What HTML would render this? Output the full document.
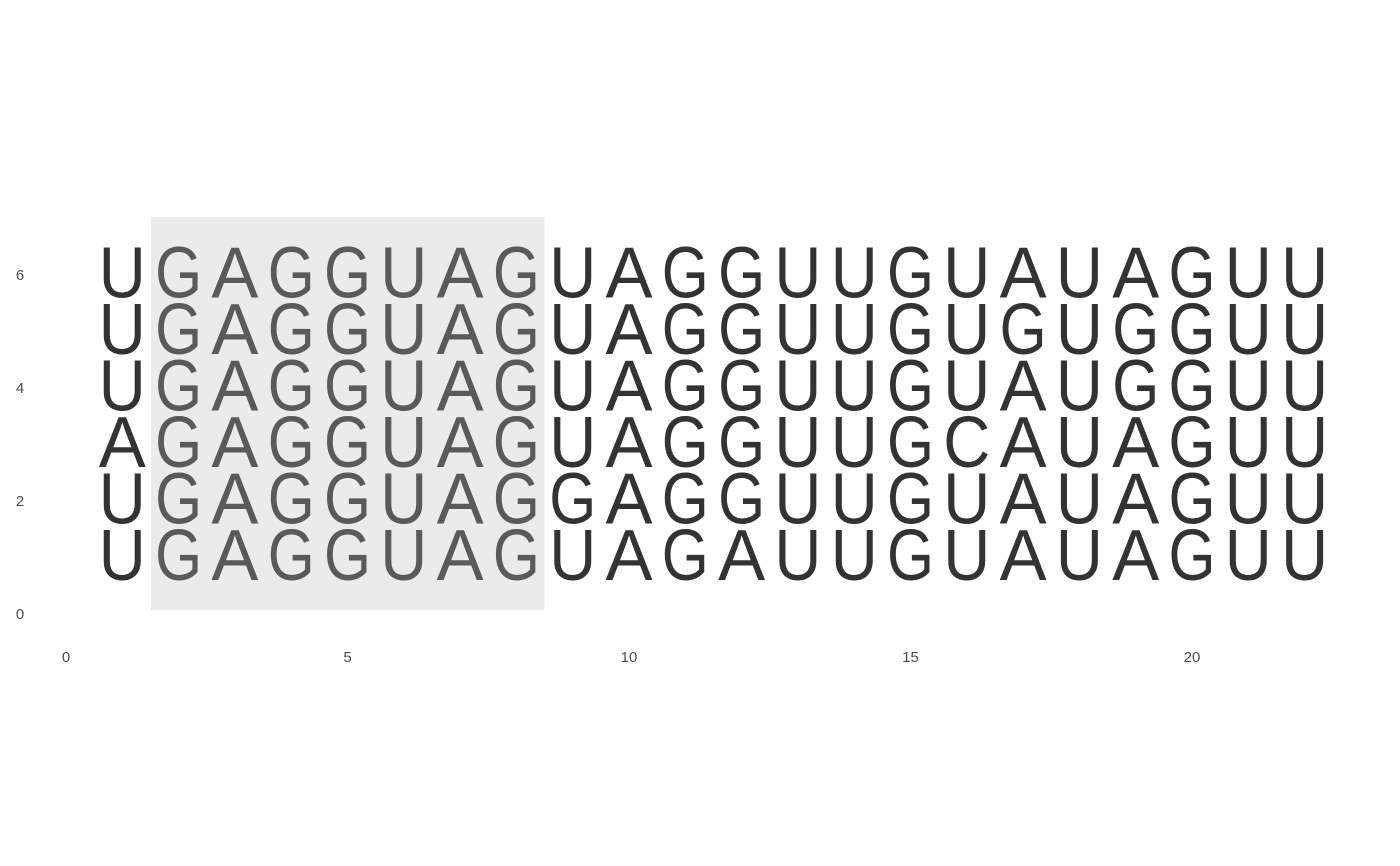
<!DOCTYPE html>
<html><head><meta charset="utf-8"><style>
html,body{margin:0;padding:0;background:#fff;}
svg{display:block;}
.a{font-family:"Liberation Sans",sans-serif;font-size:15px;fill:#4d4d4d;}
.l{font-family:"Liberation Sans",sans-serif;font-size:72px;}
.d{fill:#333333;}
.g{fill:#5a5a5a;}
</style></head><body>
<svg width="1400" height="866" viewBox="0 0 1400 866" xmlns="http://www.w3.org/2000/svg">
<rect x="151" y="217" width="393.5" height="393" fill="#ebebeb"/>
<text class="a" x="20" y="280" text-anchor="middle">6</text>
<text class="a" x="20" y="393" text-anchor="middle">4</text>
<text class="a" x="20" y="506" text-anchor="middle">2</text>
<text class="a" x="20" y="619" text-anchor="middle">0</text>
<text class="a" x="66" y="662" text-anchor="middle">0</text>
<text class="a" x="347.5" y="662" text-anchor="middle">5</text>
<text class="a" x="629" y="662" text-anchor="middle">10</text>
<text class="a" x="910.5" y="662" text-anchor="middle">15</text>
<text class="a" x="1192" y="662" text-anchor="middle">20</text>
<g class="l">
<g transform="translate(0,297.5)">
<text class="d" x="98.8" textLength="47" lengthAdjust="spacingAndGlyphs">U</text>
<text class="g" x="155.1" textLength="47" lengthAdjust="spacingAndGlyphs">G</text>
<text class="g" x="211.4" textLength="47" lengthAdjust="spacingAndGlyphs">A</text>
<text class="g" x="267.7" textLength="47" lengthAdjust="spacingAndGlyphs">G</text>
<text class="g" x="324" textLength="47" lengthAdjust="spacingAndGlyphs">G</text>
<text class="g" x="380.3" textLength="47" lengthAdjust="spacingAndGlyphs">U</text>
<text class="g" x="436.6" textLength="47" lengthAdjust="spacingAndGlyphs">A</text>
<text class="g" x="492.9" textLength="47" lengthAdjust="spacingAndGlyphs">G</text>
<text class="d" x="549.2" textLength="47" lengthAdjust="spacingAndGlyphs">U</text>
<text class="d" x="605.5" textLength="47" lengthAdjust="spacingAndGlyphs">A</text>
<text class="d" x="661.8" textLength="47" lengthAdjust="spacingAndGlyphs">G</text>
<text class="d" x="718.1" textLength="47" lengthAdjust="spacingAndGlyphs">G</text>
<text class="d" x="774.4" textLength="47" lengthAdjust="spacingAndGlyphs">U</text>
<text class="d" x="830.7" textLength="47" lengthAdjust="spacingAndGlyphs">U</text>
<text class="d" x="887" textLength="47" lengthAdjust="spacingAndGlyphs">G</text>
<text class="d" x="943.3" textLength="47" lengthAdjust="spacingAndGlyphs">U</text>
<text class="d" x="999.6" textLength="47" lengthAdjust="spacingAndGlyphs">A</text>
<text class="d" x="1055.9" textLength="47" lengthAdjust="spacingAndGlyphs">U</text>
<text class="d" x="1112.2" textLength="47" lengthAdjust="spacingAndGlyphs">A</text>
<text class="d" x="1168.5" textLength="47" lengthAdjust="spacingAndGlyphs">G</text>
<text class="d" x="1224.8" textLength="47" lengthAdjust="spacingAndGlyphs">U</text>
<text class="d" x="1281.1" textLength="47" lengthAdjust="spacingAndGlyphs">U</text>
</g>
<g transform="translate(0,354)">
<text class="d" x="98.8" textLength="47" lengthAdjust="spacingAndGlyphs">U</text>
<text class="g" x="155.1" textLength="47" lengthAdjust="spacingAndGlyphs">G</text>
<text class="g" x="211.4" textLength="47" lengthAdjust="spacingAndGlyphs">A</text>
<text class="g" x="267.7" textLength="47" lengthAdjust="spacingAndGlyphs">G</text>
<text class="g" x="324" textLength="47" lengthAdjust="spacingAndGlyphs">G</text>
<text class="g" x="380.3" textLength="47" lengthAdjust="spacingAndGlyphs">U</text>
<text class="g" x="436.6" textLength="47" lengthAdjust="spacingAndGlyphs">A</text>
<text class="g" x="492.9" textLength="47" lengthAdjust="spacingAndGlyphs">G</text>
<text class="d" x="549.2" textLength="47" lengthAdjust="spacingAndGlyphs">U</text>
<text class="d" x="605.5" textLength="47" lengthAdjust="spacingAndGlyphs">A</text>
<text class="d" x="661.8" textLength="47" lengthAdjust="spacingAndGlyphs">G</text>
<text class="d" x="718.1" textLength="47" lengthAdjust="spacingAndGlyphs">G</text>
<text class="d" x="774.4" textLength="47" lengthAdjust="spacingAndGlyphs">U</text>
<text class="d" x="830.7" textLength="47" lengthAdjust="spacingAndGlyphs">U</text>
<text class="d" x="887" textLength="47" lengthAdjust="spacingAndGlyphs">G</text>
<text class="d" x="943.3" textLength="47" lengthAdjust="spacingAndGlyphs">U</text>
<text class="d" x="999.6" textLength="47" lengthAdjust="spacingAndGlyphs">G</text>
<text class="d" x="1055.9" textLength="47" lengthAdjust="spacingAndGlyphs">U</text>
<text class="d" x="1112.2" textLength="47" lengthAdjust="spacingAndGlyphs">G</text>
<text class="d" x="1168.5" textLength="47" lengthAdjust="spacingAndGlyphs">G</text>
<text class="d" x="1224.8" textLength="47" lengthAdjust="spacingAndGlyphs">U</text>
<text class="d" x="1281.1" textLength="47" lengthAdjust="spacingAndGlyphs">U</text>
</g>
<g transform="translate(0,410.5)">
<text class="d" x="98.8" textLength="47" lengthAdjust="spacingAndGlyphs">U</text>
<text class="g" x="155.1" textLength="47" lengthAdjust="spacingAndGlyphs">G</text>
<text class="g" x="211.4" textLength="47" lengthAdjust="spacingAndGlyphs">A</text>
<text class="g" x="267.7" textLength="47" lengthAdjust="spacingAndGlyphs">G</text>
<text class="g" x="324" textLength="47" lengthAdjust="spacingAndGlyphs">G</text>
<text class="g" x="380.3" textLength="47" lengthAdjust="spacingAndGlyphs">U</text>
<text class="g" x="436.6" textLength="47" lengthAdjust="spacingAndGlyphs">A</text>
<text class="g" x="492.9" textLength="47" lengthAdjust="spacingAndGlyphs">G</text>
<text class="d" x="549.2" textLength="47" lengthAdjust="spacingAndGlyphs">U</text>
<text class="d" x="605.5" textLength="47" lengthAdjust="spacingAndGlyphs">A</text>
<text class="d" x="661.8" textLength="47" lengthAdjust="spacingAndGlyphs">G</text>
<text class="d" x="718.1" textLength="47" lengthAdjust="spacingAndGlyphs">G</text>
<text class="d" x="774.4" textLength="47" lengthAdjust="spacingAndGlyphs">U</text>
<text class="d" x="830.7" textLength="47" lengthAdjust="spacingAndGlyphs">U</text>
<text class="d" x="887" textLength="47" lengthAdjust="spacingAndGlyphs">G</text>
<text class="d" x="943.3" textLength="47" lengthAdjust="spacingAndGlyphs">U</text>
<text class="d" x="999.6" textLength="47" lengthAdjust="spacingAndGlyphs">A</text>
<text class="d" x="1055.9" textLength="47" lengthAdjust="spacingAndGlyphs">U</text>
<text class="d" x="1112.2" textLength="47" lengthAdjust="spacingAndGlyphs">G</text>
<text class="d" x="1168.5" textLength="47" lengthAdjust="spacingAndGlyphs">G</text>
<text class="d" x="1224.8" textLength="47" lengthAdjust="spacingAndGlyphs">U</text>
<text class="d" x="1281.1" textLength="47" lengthAdjust="spacingAndGlyphs">U</text>
</g>
<g transform="translate(0,467)">
<text class="d" x="98.8" textLength="47" lengthAdjust="spacingAndGlyphs">A</text>
<text class="g" x="155.1" textLength="47" lengthAdjust="spacingAndGlyphs">G</text>
<text class="g" x="211.4" textLength="47" lengthAdjust="spacingAndGlyphs">A</text>
<text class="g" x="267.7" textLength="47" lengthAdjust="spacingAndGlyphs">G</text>
<text class="g" x="324" textLength="47" lengthAdjust="spacingAndGlyphs">G</text>
<text class="g" x="380.3" textLength="47" lengthAdjust="spacingAndGlyphs">U</text>
<text class="g" x="436.6" textLength="47" lengthAdjust="spacingAndGlyphs">A</text>
<text class="g" x="492.9" textLength="47" lengthAdjust="spacingAndGlyphs">G</text>
<text class="d" x="549.2" textLength="47" lengthAdjust="spacingAndGlyphs">U</text>
<text class="d" x="605.5" textLength="47" lengthAdjust="spacingAndGlyphs">A</text>
<text class="d" x="661.8" textLength="47" lengthAdjust="spacingAndGlyphs">G</text>
<text class="d" x="718.1" textLength="47" lengthAdjust="spacingAndGlyphs">G</text>
<text class="d" x="774.4" textLength="47" lengthAdjust="spacingAndGlyphs">U</text>
<text class="d" x="830.7" textLength="47" lengthAdjust="spacingAndGlyphs">U</text>
<text class="d" x="887" textLength="47" lengthAdjust="spacingAndGlyphs">G</text>
<text class="d" x="943.3" textLength="47" lengthAdjust="spacingAndGlyphs">C</text>
<text class="d" x="999.6" textLength="47" lengthAdjust="spacingAndGlyphs">A</text>
<text class="d" x="1055.9" textLength="47" lengthAdjust="spacingAndGlyphs">U</text>
<text class="d" x="1112.2" textLength="47" lengthAdjust="spacingAndGlyphs">A</text>
<text class="d" x="1168.5" textLength="47" lengthAdjust="spacingAndGlyphs">G</text>
<text class="d" x="1224.8" textLength="47" lengthAdjust="spacingAndGlyphs">U</text>
<text class="d" x="1281.1" textLength="47" lengthAdjust="spacingAndGlyphs">U</text>
</g>
<g transform="translate(0,523.5)">
<text class="d" x="98.8" textLength="47" lengthAdjust="spacingAndGlyphs">U</text>
<text class="g" x="155.1" textLength="47" lengthAdjust="spacingAndGlyphs">G</text>
<text class="g" x="211.4" textLength="47" lengthAdjust="spacingAndGlyphs">A</text>
<text class="g" x="267.7" textLength="47" lengthAdjust="spacingAndGlyphs">G</text>
<text class="g" x="324" textLength="47" lengthAdjust="spacingAndGlyphs">G</text>
<text class="g" x="380.3" textLength="47" lengthAdjust="spacingAndGlyphs">U</text>
<text class="g" x="436.6" textLength="47" lengthAdjust="spacingAndGlyphs">A</text>
<text class="g" x="492.9" textLength="47" lengthAdjust="spacingAndGlyphs">G</text>
<text class="d" x="549.2" textLength="47" lengthAdjust="spacingAndGlyphs">G</text>
<text class="d" x="605.5" textLength="47" lengthAdjust="spacingAndGlyphs">A</text>
<text class="d" x="661.8" textLength="47" lengthAdjust="spacingAndGlyphs">G</text>
<text class="d" x="718.1" textLength="47" lengthAdjust="spacingAndGlyphs">G</text>
<text class="d" x="774.4" textLength="47" lengthAdjust="spacingAndGlyphs">U</text>
<text class="d" x="830.7" textLength="47" lengthAdjust="spacingAndGlyphs">U</text>
<text class="d" x="887" textLength="47" lengthAdjust="spacingAndGlyphs">G</text>
<text class="d" x="943.3" textLength="47" lengthAdjust="spacingAndGlyphs">U</text>
<text class="d" x="999.6" textLength="47" lengthAdjust="spacingAndGlyphs">A</text>
<text class="d" x="1055.9" textLength="47" lengthAdjust="spacingAndGlyphs">U</text>
<text class="d" x="1112.2" textLength="47" lengthAdjust="spacingAndGlyphs">A</text>
<text class="d" x="1168.5" textLength="47" lengthAdjust="spacingAndGlyphs">G</text>
<text class="d" x="1224.8" textLength="47" lengthAdjust="spacingAndGlyphs">U</text>
<text class="d" x="1281.1" textLength="47" lengthAdjust="spacingAndGlyphs">U</text>
</g>
<g transform="translate(0,580)">
<text class="d" x="98.8" textLength="47" lengthAdjust="spacingAndGlyphs">U</text>
<text class="g" x="155.1" textLength="47" lengthAdjust="spacingAndGlyphs">G</text>
<text class="g" x="211.4" textLength="47" lengthAdjust="spacingAndGlyphs">A</text>
<text class="g" x="267.7" textLength="47" lengthAdjust="spacingAndGlyphs">G</text>
<text class="g" x="324" textLength="47" lengthAdjust="spacingAndGlyphs">G</text>
<text class="g" x="380.3" textLength="47" lengthAdjust="spacingAndGlyphs">U</text>
<text class="g" x="436.6" textLength="47" lengthAdjust="spacingAndGlyphs">A</text>
<text class="g" x="492.9" textLength="47" lengthAdjust="spacingAndGlyphs">G</text>
<text class="d" x="549.2" textLength="47" lengthAdjust="spacingAndGlyphs">U</text>
<text class="d" x="605.5" textLength="47" lengthAdjust="spacingAndGlyphs">A</text>
<text class="d" x="661.8" textLength="47" lengthAdjust="spacingAndGlyphs">G</text>
<text class="d" x="718.1" textLength="47" lengthAdjust="spacingAndGlyphs">A</text>
<text class="d" x="774.4" textLength="47" lengthAdjust="spacingAndGlyphs">U</text>
<text class="d" x="830.7" textLength="47" lengthAdjust="spacingAndGlyphs">U</text>
<text class="d" x="887" textLength="47" lengthAdjust="spacingAndGlyphs">G</text>
<text class="d" x="943.3" textLength="47" lengthAdjust="spacingAndGlyphs">U</text>
<text class="d" x="999.6" textLength="47" lengthAdjust="spacingAndGlyphs">A</text>
<text class="d" x="1055.9" textLength="47" lengthAdjust="spacingAndGlyphs">U</text>
<text class="d" x="1112.2" textLength="47" lengthAdjust="spacingAndGlyphs">A</text>
<text class="d" x="1168.5" textLength="47" lengthAdjust="spacingAndGlyphs">G</text>
<text class="d" x="1224.8" textLength="47" lengthAdjust="spacingAndGlyphs">U</text>
<text class="d" x="1281.1" textLength="47" lengthAdjust="spacingAndGlyphs">U</text>
</g>
</g>
</svg>
</body></html>
